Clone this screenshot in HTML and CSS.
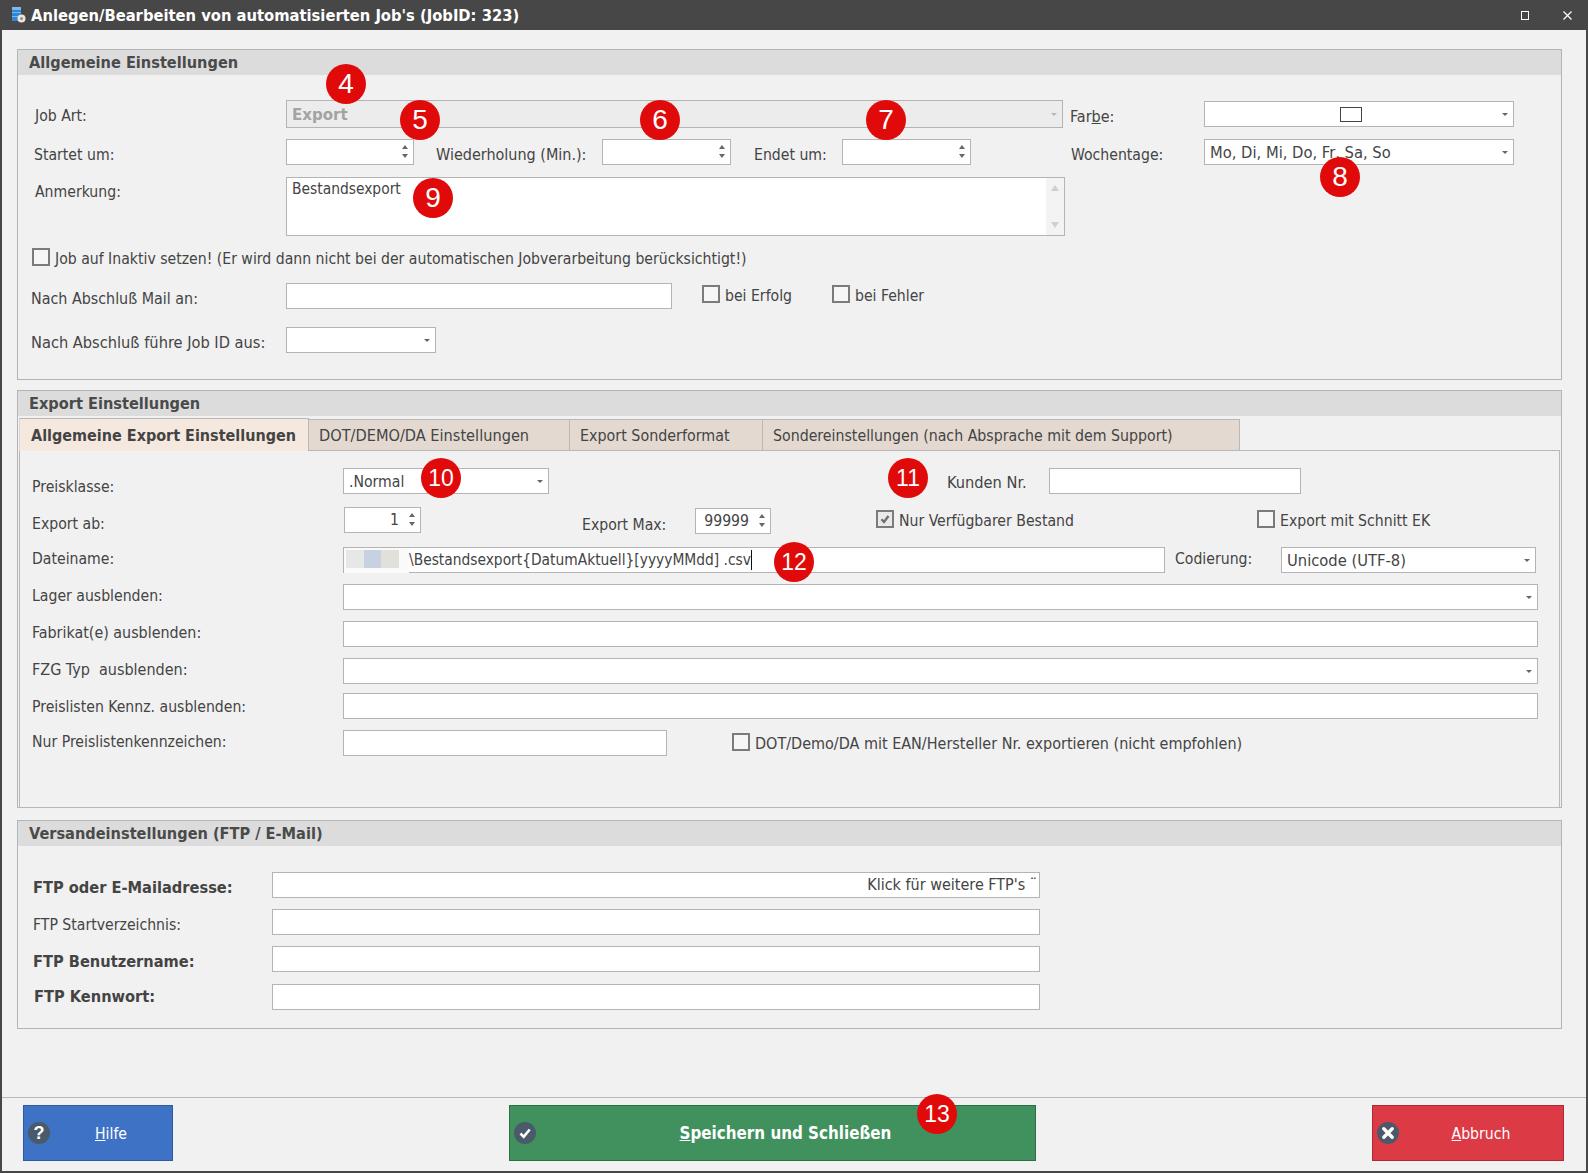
FILE: index.html
```html
<!DOCTYPE html>
<html lang="de">
<head>
<meta charset="utf-8">
<title>Anlegen/Bearbeiten von automatisierten Job's</title>
<link rel="stylesheet" href="styles.css">
</head>
<body>
<div class="window">
  <header class="titlebar">
    <svg class="app-icon" width="15" height="16" viewBox="0 0 15 16"><rect x="0" y="0" width="9" height="14" fill="#2f86d6"/><rect x="0" y="0" width="9" height="3" fill="#7cb8ec"/><rect x="0" y="5" width="9" height="1" fill="#7cb8ec"/><rect x="0" y="9" width="9" height="1" fill="#7cb8ec"/><circle cx="9.500" cy="11.500" r="4" fill="#ece6d4"/><circle cx="9.500" cy="11.500" r="1.500" fill="#8a8f94"/></svg>
    <span class="title-text">Anlegen/Bearbeiten von automatisierten Job's (JobID: 323)</span>
    <span class="win-max"></span>
    <svg class="win-close" width="9" height="9" viewBox="0 0 9 9"><path d="M.5.5l8 8M8.500.5l-8 8" stroke="#fff" stroke-width="1.200"/></svg>
  </header>

  <main class="content">
    <section class="group group-general">
      <h2 class="group-head">Allgemeine Einstellungen</h2>
      <div class="general-body">
        <div class="row r-job">
          <label class="lab pad-l17 drop2">Job Art:</label>
          <div class="box combo disabled"><span class="val bold fs-export">Export</span><i class="caret"></i></div>
          <label class="lab pad-l7 drop3 fs16">Far<u>b</u>e:</label>
          <div class="box combo mid"><span class="swatch"></span><i class="caret"></i></div>
        </div>
        <div class="row r-start">
          <label class="lab pad-l16 drop2">Startet um:</label>
          <div class="box spin"><i class="spin-btns"><b class="up"></b><b class="down"></b></i></div>
          <label class="lab pad-l22 drop2 fs16">Wiederholung (Min.):</label>
          <div class="box spin"><i class="spin-btns"><b class="up"></b><b class="down"></b></i></div>
          <label class="lab pad-l23 drop2">Endet um:</label>
          <div class="box spin"><i class="spin-btns"><b class="up"></b><b class="down"></b></i></div>
          <label class="lab pad-l100 drop2">Wochentage:</label>
          <div class="box combo"><span class="val fs-wide nudge">Mo, Di, Mi, Do, Fr, Sa, So</span><i class="caret"></i></div>
        </div>
        <div class="row r-note">
          <label class="lab pad-l17 drop1">Anmerkung:</label>
          <div class="box memo"><span class="val memo-text">Bestandsexport</span>
            <span class="scroll"><i class="tri-up"></i><i class="tri-down"></i></span></div>
        </div>
        <div class="row r-inactive">
          <label class="check"><span class="cb"></span>Job auf Inaktiv setzen! (Er wird dann nicht bei der automatischen Jobverarbeitung berücksichtigt!)</label>
        </div>
        <div class="row r-mail">
          <label class="lab pad-l13 drop2 fs15-8">Nach Abschluß Mail an:</label>
          <div class="box"></div>
          <label class="check check-mail pad-l30"><span class="cb"></span>bei Erfolg</label>
          <label class="check check-mail"><span class="cb"></span>bei Fehler</label>
        </div>
        <div class="row r-next">
          <label class="lab pad-l13 drop2 fs16-2">Nach Abschluß führe Job ID aus:</label>
          <div class="box combo"><i class="caret"></i></div>
        </div>
      </div>
    </section>

    <section class="group group-export">
      <h2 class="group-head">Export Einstellungen</h2>
      <nav class="tabs">
        <span class="tab active t1">Allgemeine Export Einstellungen</span>
        <span class="tab t2">DOT/DEMO/DA Einstellungen</span>
        <span class="tab t3">Export Sonderformat</span>
        <span class="tab t4">Sondereinstellungen (nach Absprache mit dem Support)</span>
      </nav>
      <div class="panel">
        <div class="row p-r1">
          <label class="lab pad-l12 drop5">Preisklasse:</label>
          <div class="box combo"><span class="val nudge">.Normal</span><i class="caret"></i></div>
          <span></span>
          <label class="lab drop1 fs16-2">Kunden Nr.</label>
          <div class="box"></div>
        </div>
        <div class="row p-r2">
          <label class="lab pad-l12 drop3">Export ab:</label>
          <div class="box spin num num-first"><span class="val">1</span><i class="spin-btns"><b class="up"></b><b class="down"></b></i></div>
          <label class="lab pad-l161 drop3 shift1">Export Max:</label>
          <div class="box spin num num-max"><span class="val">99999</span><i class="spin-btns"><b class="up"></b><b class="down"></b></i></div>
          <label class="check pad-l105 check-low"><span class="cb checked"><svg width="12" height="12" viewBox="0 0 12 12"><path d="M2.500 6.300l2.500 2.700 4.500-6" fill="none" stroke="#6e6e6e" stroke-width="2.400"/></svg></span>Nur Verfügbarer Bestand</label>
          <label class="check check-low"><span class="cb"></span>Export mit Schnitt EK</label>
        </div>
        <div class="row p-r3">
          <label class="lab pad-l12 lift2">Dateiname:</label>
          <div class="box file"><span class="blur-path"><i class="b1"></i><i class="b2"></i><i class="b3"></i></span><span class="val file-text">\Bestandsexport{DatumAktuell}[yyyyMMdd] .csv</span><i class="cursor"></i></div>
          <label class="lab pad-l10 lift2">Codierung:</label>
          <div class="box combo"><span class="val fs-wide nudge">Unicode (UTF-8)</span><i class="caret"></i></div>
        </div>
        <div class="row p-wide gap11">
          <label class="lab pad-l12 lift2">Lager ausblenden:</label>
          <div class="box combo"><i class="caret"></i></div>
        </div>
        <div class="row p-wide gap11">
          <label class="lab pad-l12 lift2 fs15-8">Fabrikat(e) ausblenden:</label>
          <div class="box"></div>
        </div>
        <div class="row p-wide gap11">
          <label class="lab pad-l12 lift2 fs16">FZG Typ&nbsp;&nbsp;ausblenden:</label>
          <div class="box combo"><i class="caret"></i></div>
        </div>
        <div class="row p-wide gap9">
          <label class="lab pad-l12">Preislisten Kennz. ausblenden:</label>
          <div class="box"></div>
        </div>
        <div class="row p-last gap11">
          <label class="lab pad-l12 lift2">Nur Preislistenkennzeichen:</label>
          <div class="box"></div>
          <label class="check pad-l65 check-dot fs16"><span class="cb"></span>DOT/Demo/DA mit EAN/Hersteller Nr. exportieren (nicht empfohlen)</label>
        </div>
      </div>
    </section>

    <section class="group group-send">
      <h2 class="group-head">Versandeinstellungen (FTP / E-Mail)</h2>
      <div class="send-body">
        <div class="row s-row"><label class="lab pad-l15 drop2 bold fs16-2">FTP oder E-Mailadresse:</label><div class="box right"><span class="val fs16">Klick für weitere FTP's ¨</span></div></div>
        <div class="row s-row gap11"><label class="lab pad-l15 drop2">FTP Startverzeichnis:</label><div class="box"></div></div>
        <div class="row s-row gap11"><label class="lab pad-l15 drop2 bold fs16-2">FTP Benutzername:</label><div class="box"></div></div>
        <div class="row s-row gap12"><label class="lab pad-l16 lift1 bold fs16-2">FTP Kennwort:</label><div class="box"></div></div>
      </div>
    </section>
  </main>

  <footer class="footer">
    <button class="btn btn-help"><svg class="btn-icon" width="22" height="22" viewBox="0 0 22 22"><circle cx="11" cy="11" r="11" fill="#4a5a6a"/><text x="11" y="17" text-anchor="middle" class="icon-q">?</text></svg><span class="btn-text"><u>H</u>ilfe</span></button>
    <button class="btn btn-save"><svg class="btn-icon" width="22" height="22" viewBox="0 0 22 22"><circle cx="11" cy="11" r="11" fill="#4a5a6a"/><path d="M6.500 11.500l3.200 3.400 6-7.400" fill="none" stroke="#fff" stroke-width="2.600"/></svg><span class="btn-text bold fs-save"><u>S</u>peichern und Schließen</span></button>
    <button class="btn btn-cancel"><svg class="btn-icon" width="22" height="22" viewBox="0 0 22 22"><circle cx="11" cy="11" r="11" fill="#4a5a6a"/><path d="M6.800 6.800l8.400 8.400M15.200 6.800l-8.400 8.400" stroke="#fff" stroke-width="3.400" stroke-linecap="round"/></svg><span class="btn-text"><u>A</u>bbruch</span></button>
  </footer>

  <span class="badge b4">4</span>
  <span class="badge b5">5</span>
  <span class="badge b6">6</span>
  <span class="badge b7">7</span>
  <span class="badge b8">8</span>
  <span class="badge b9">9</span>
  <span class="badge two b10">10</span>
  <span class="badge two b11">11</span>
  <span class="badge two b12">12</span>
  <span class="badge two b13">13</span>
</div>
</body>
</html>
```
FILE: styles.css
```css
* { box-sizing: border-box; }
html, body { margin: 0; padding: 0; }
body {
  font-family: "DejaVu Sans Condensed", "DejaVu Sans", sans-serif;
  font-stretch: condensed;
  font-size: 15.650px;
  color: #444;
}
.window {
  position: relative;
  width: 1588px;
  height: 1173px;
  display: flex;
  flex-direction: column;
  background: #f1f1f1;
  border-left: 2px solid #474747;
  border-right: 2px solid #474747;
  border-bottom: 2px solid #474747;
  overflow: hidden;
}
.titlebar {
  height: 30px;
  flex: none;
  margin: 0 -2px;
  background: #474747;
  color: #fff;
  display: flex;
  align-items: center;
  padding: 0 16px 0 12px;
}
.app-icon { margin-right: 4px; }
.title-text { font-weight: 700; font-size: 16.400px; flex: 1; }
.win-max { width: 8px; height: 9px; border: 1.500px solid #fff; margin-right: 34px; }
.content {
  flex: 1;
  padding: 19px 24px 0 15px;
}
.group {
  border: 1px solid #b4b4b4;
}
.group-general { height: 331px; }
.group-export { height: 418px; margin-top: 10px; }
.group-send { height: 209px; margin-top: 12px; }
.group-head {
  margin: 0;
  height: 25px;
  line-height: 25px;
  padding-left: 11px;
  background: #dcdcdc;
  font-size: 16.200px;
  font-weight: 700;
  color: #4a4a4a;
}
.general-body { padding-top: 25px; }
.row { display: grid; align-items: start; }
.box {
  position: relative;
  height: 26px;
  background: #fff;
  border: 1px solid #b4b4b4;
  display: flex;
  align-items: center;
}
.val { padding-left: 5px; line-height: 22px; white-space: nowrap; }
.nudge { padding-top: 2px; }
.bold { font-weight: 700; }
.fs15-8 { font-size: 15.900px; }
.fs16 { font-size: 16px; }
.fs16-2 { font-size: 16.250px; }
.fs-wide { font-size: 16.400px; }
.fs-export { font-size: 16.700px; }
.lab { display: block; height: 26px; line-height: 28px; white-space: nowrap; }
.drop1 { padding-top: 1px; }
.drop2 { padding-top: 2px; }
.drop3 { padding-top: 3px; }
.drop5 { padding-top: 5px; }
.lift1 { margin-top: -1px; }
.lift2 { margin-top: -2px; }
.shift1 { margin-top: 1px; }
.pad-l7 { padding-left: 7px; }
.pad-l10 { padding-left: 10px; }
.pad-l12 { padding-left: 12px; }
.pad-l13 { padding-left: 13px; }
.pad-l15 { padding-left: 15px; }
.pad-l16 { padding-left: 16px; }
.pad-l17 { padding-left: 17px; }
.pad-l22 { padding-left: 22px; }
.pad-l23 { padding-left: 23px; }
.pad-l30 { padding-left: 30px; }
.pad-l65 { padding-left: 65px; }
.pad-l100 { padding-left: 100px; }
.pad-l105 { padding-left: 105px; }
.pad-l161 { padding-left: 161px; }

.caret {
  position: absolute;
  right: 5px;
  top: 50%;
  margin-top: -1px;
  border-left: 3px solid transparent;
  border-right: 3px solid transparent;
  border-top: 3px solid #666;
}
.combo.disabled {
  background: #ececec;
  color: #a3a3a3;
  height: 28px;
  border-color: #b4b4b4;
}
.combo.disabled .caret { border-top-color: #b8b8b8; }
.combo.mid { justify-content: center; margin-top: 1px; padding-right: 16px; }
.swatch { width: 22px; height: 15px; border: 1px solid #444; background: #fff; }
.spin-btns { position: absolute; right: 5px; top: 5px; display: flex; flex-direction: column; gap: 5px; }
.spin-btns .up { border-left: 3px solid transparent; border-right: 3px solid transparent; border-bottom: 4px solid #666; }
.spin-btns .down { border-left: 3px solid transparent; border-right: 3px solid transparent; border-top: 4px solid #666; }

.memo { height: 59px; align-items: flex-start; }
.memo-text { font-size: 15.400px; }
.scroll {
  position: absolute;
  top: 0;
  right: 0;
  bottom: 0;
  width: 18px;
  background: #f3f3f3;
  display: flex;
  flex-direction: column;
  justify-content: space-between;
  align-items: center;
  padding: 7px 0;
}
.tri-up { border-left: 4px solid transparent; border-right: 4px solid transparent; border-bottom: 6px solid #cfcfcf; }
.tri-down { border-left: 4px solid transparent; border-right: 4px solid transparent; border-top: 6px solid #cfcfcf; }

.check { display: flex; align-items: center; height: 18px; padding-top: 2px; white-space: nowrap; }
.cb {
  flex: none;
  width: 18px;
  height: 18px;
  margin: -2px 5px 0 0;
  border: 2px solid #7b7b7b;
  background: #f6f6f6;
  display: flex;
  align-items: center;
  justify-content: center;
}
.cb.checked { background: #e9e9e9; }

.r-job { grid-template-columns: 268px 777px 141px 310px; }
.r-start { margin-top: 11px; grid-template-columns: 268px 128px 188px 129px 111px 129px 233px 310px; }
.r-note { margin-top: 12px; grid-template-columns: 268px 779px; }
.r-inactive { margin-top: 12px; padding-left: 14px; }
.r-mail { margin-top: 17px; grid-template-columns: 268px 386px 160px 200px; }
.check-mail { margin-top: 2px; }
.r-next { margin-top: 18px; grid-template-columns: 268px 150px; }

.tabs { display: flex; margin: 2px 0 0 1px; height: 33px; align-items: flex-end; }
.tab {
  height: 32px;
  line-height: 32px;
  font-size: 15.900px;
  background: #e3d9d0;
  border: 1px solid #b8b8b8;
  border-left: 0;
  border-bottom: 1px solid #b8b8b8;
  padding-left: 10px;
  white-space: nowrap;
}
.tab.active {
  height: 33px;
  line-height: 33px;
  background: #f5e9df;
  font-weight: 700;
  font-size: 16px;
  padding-left: 11px;
  border-left: 1px solid #d8d8d8;
  border-bottom: 0;
}
.t1 { width: 290px; }
.t2 { width: 261px; font-size: 16.200px; }
.t3 { width: 193px; }
.t4 { width: 477px; font-size: 15.750px; }

.panel {
  margin: -1px 1px 0 1px;
  height: 358px;
  border: 1px solid #b8b8b8;
  padding-top: 17px;
}
.p-r1 { grid-template-columns: 323px 206px 398px 102px 252px; }
.p-r2 { margin-top: 13px; grid-template-columns: 323px 78px 274px 76px 486px 1fr; }
.num-first { margin-left: 1px; width: 77px; }
.num-max { margin-top: 1px; }
.num { justify-content: flex-end; padding-right: 21px; }
.num .val { padding: 0; }
.check-low { margin-top: 3px; }
.p-r3 { margin-top: 13px; grid-template-columns: 323px 822px 116px 255px; }
.p-wide { grid-template-columns: 323px 1195px; }
.p-last { grid-template-columns: 323px 324px 1fr; }
.gap9 { margin-top: 9px; }
.gap11 { margin-top: 11px; }
.gap12 { margin-top: 12px; }
.check-dot { margin-top: 3px; }
.file { padding-left: 0; }
.blur-path {
  flex: none;
  align-self: flex-start;
  width: 65px;
  height: 25px;
  background: #fafafa;
  display: flex;
  padding: 2px 0 5px 2px;
}
.blur-path i { display: block; height: 100%; }
.b1 { width: 18px; background: #e6e8e7; }
.b2 { width: 17px; background: #c7d1e2; }
.b3 { width: 18px; background: #e2e0da; }
.file-text { padding-left: 0; font-size: 15.360px; }
.cursor { width: 1px; height: 20px; background: #111; }

.send-body { padding-top: 26px; }
.s-row { grid-template-columns: 254px 768px; }
.right { justify-content: flex-end; padding-right: 2px; }

.footer {
  flex: none;
  height: 74px;
  margin-top: auto;
  border-top: 1px solid #b8b8b8;
  padding: 7px 22px 0 21px;
  display: flex;
  justify-content: space-between;
  align-items: flex-start;
}
.btn {
  height: 56px;
  border: 1px solid;
  padding: 0 0 0 4px;
  display: flex;
  align-items: center;
  color: #fff;
  font: inherit;
  font-stretch: condensed;
}
.btn-text { flex: 1; text-align: center; padding-top: 1px; }
.btn .fs-save { font-size: 16.850px; padding-top: 0; }
.btn-icon { flex: none; }
.icon-q { font-family: "Liberation Sans", sans-serif; font-weight: 700; font-size: 18px; fill: #fff; }
.btn-help { width: 150px; background: #3d72c4; border-color: #2d5a9c; }
.btn-save { width: 527px; background: #40915d; border-color: #2f6d45; }
.btn-cancel { width: 192px; background: #dc3a45; border-color: #b02a35; }

.badge {
  position: absolute;
  width: 40px;
  height: 40px;
  border-radius: 50%;
  background: #e00a0a;
  color: #fff;
  font-family: "Liberation Sans", sans-serif;
  font-size: 28px;
  line-height: 40px;
  text-align: center;
}
.badge.two { font-size: 23px; }
.b4 { left: 324px; top: 64px; }
.b5 { left: 398px; top: 100px; }
.b6 { left: 638px; top: 100px; }
.b7 { left: 864px; top: 100px; }
.b8 { left: 1318px; top: 157px; }
.b9 { left: 411px; top: 178px; }
.b10 { left: 419px; top: 458px; }
.b11 { left: 886px; top: 458px; }
.b12 { left: 772px; top: 542px; }
.b13 { left: 915px; top: 1094px; }
```
